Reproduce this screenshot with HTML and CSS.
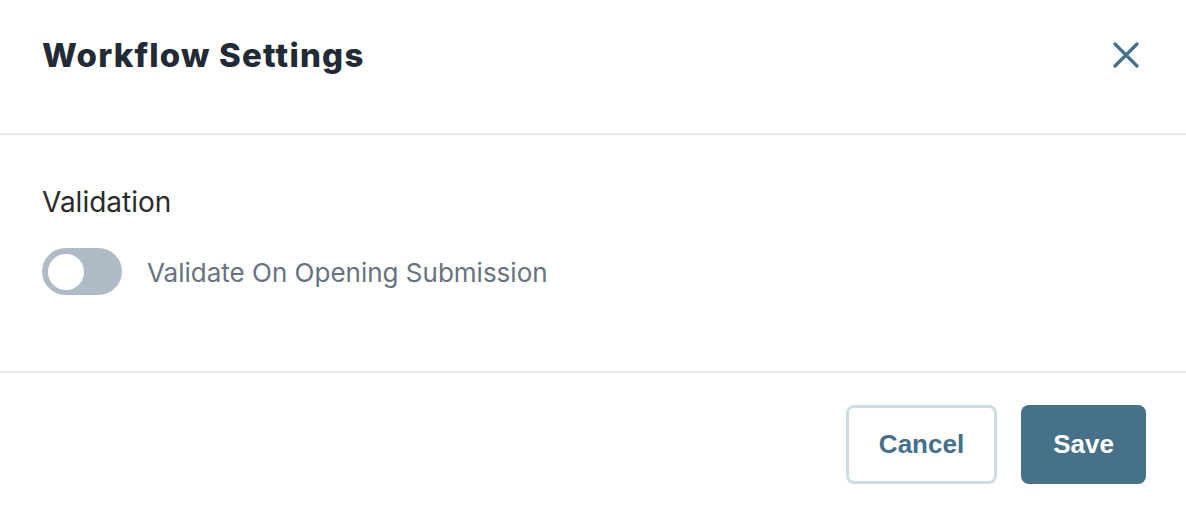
FILE: index.html
```html
<!DOCTYPE html>
<html>
<head>
<meta charset="utf-8">
<link rel="stylesheet" href="styles.css">
</head>
<body>
<div class="modal">
  <header class="modal-header">
    <h1 class="title">Workflow Settings</h1>
    <button class="close" aria-label="Close">
      <svg width="26" height="26" viewBox="0 0 26 26"><path d="M2 2 L24 24 M24 2 L2 24" stroke="#44708a" stroke-width="3.2" stroke-linecap="round" fill="none"/></svg>
    </button>
  </header>
  <section class="modal-body">
    <div class="section-label">Validation</div>
    <div class="toggle-row">
      <span class="toggle"><span class="knob"></span></span>
      <span class="toggle-label">Validate On Opening Submission</span>
    </div>
  </section>
  <footer class="modal-footer">
    <button class="btn btn-secondary">Cancel</button>
    <button class="btn btn-primary">Save</button>
  </footer>
</div>
</body>
</html>
```

FILE: styles.css
```css
* { box-sizing: border-box; }
html, body { margin: 0; padding: 0; background: #fff; }
body { font-family: Inter, "Noto Sans", sans-serif; }

.modal { width: 1186px; height: 510px; display: flex; flex-direction: column; }

.modal-header {
  height: 135px;
  display: flex;
  align-items: center;
  justify-content: space-between;
  padding: 0 47px 24px 42px;
  border-bottom: 2px solid #e6e7eb;
}
.title {
  margin: 0;
  font-family: Inter, sans-serif;
  font-weight: 800;
  font-size: 33px;
  letter-spacing: 1.2px;
  color: #222a35;
}
.close {
  background: none; border: 0; padding: 0; width: 26px; height: 26px;
  display: flex; align-items: center; justify-content: center; cursor: pointer;
}

.modal-body {
  height: 238px;
  padding: 49px 42px 0;
  border-bottom: 2px solid #e9e9ea;
}
.section-label {
  font-size: 28px;
  color: #2b2b2b;
  line-height: 36px;
}
.toggle-row {
  display: flex;
  align-items: center;
  gap: 25px;
  margin-top: 28px;
}
.toggle {
  width: 80px; height: 47px; border-radius: 24px;
  background: #b0bbc8;
  display: flex; align-items: center; padding-left: 6px;
}
.knob { width: 36px; height: 36px; border-radius: 50%; background: #fff; }
.toggle-label { font-size: 26px; color: #687281; line-height: 32px; padding-top: 3px; }

.modal-footer {
  flex: 1;
  display: flex;
  justify-content: flex-end;
  align-items: flex-start;
  gap: 24px;
  padding: 32px 40px 0 0;
}
.btn {
  height: 79px;
  border-radius: 8px;
  font-family: "Liberation Sans", Arial, sans-serif;
  font-weight: 700;
  font-size: 26px;
  cursor: pointer;
}
.btn-secondary {
  width: 151px;
  background: #fff;
  border: 3px solid #cfdde3;
  color: #44708a;
}
.btn-primary {
  width: 125px;
  background: #467188;
  border: 0;
  color: #fff;
}
```
